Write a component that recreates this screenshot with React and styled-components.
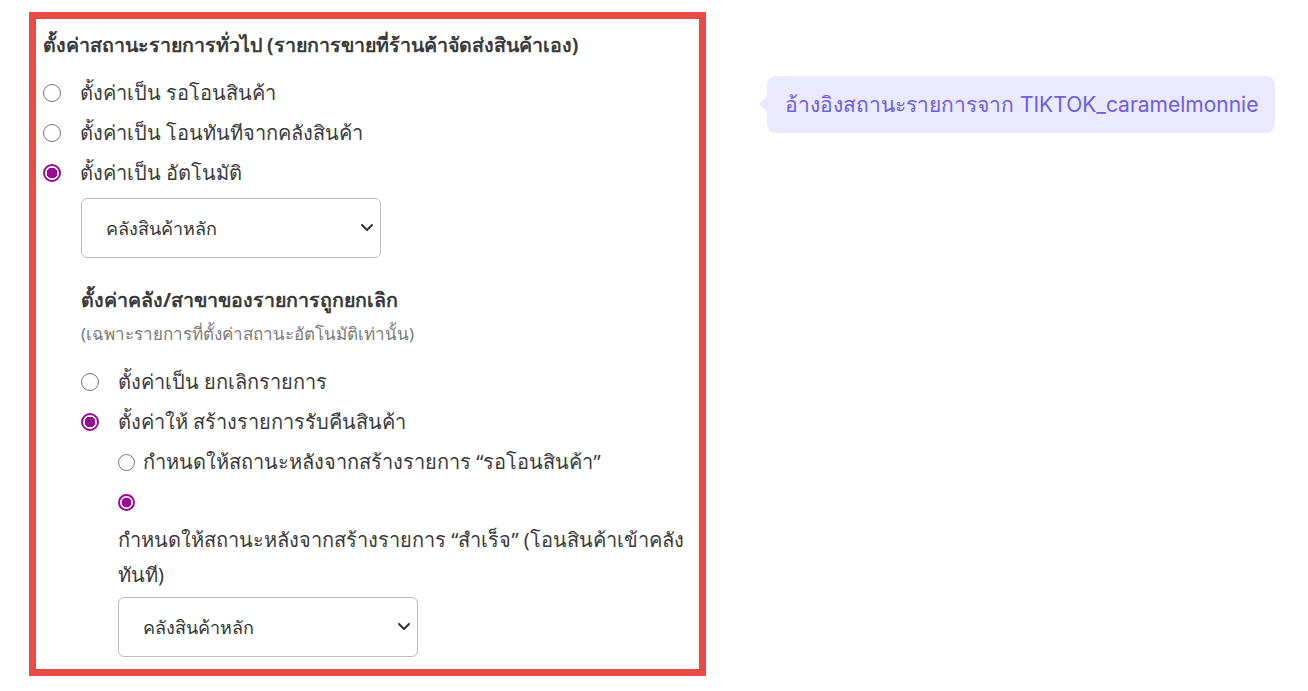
import React, { useState } from "react";
import styled, { createGlobalStyle } from "styled-components";

const GlobalStyle = createGlobalStyle`
  body {
    margin: 0;
    background: #fff;
    font-family: "Noto Sans", "Liberation Sans", sans-serif;
    color: #3b3b3b;
  }
`;

const Page = styled.div`
  display: flex;
  align-items: flex-start;
  padding: 12px 0 0 29px;
`;

const Box = styled.div`
  width: 677px;
  border: 7px solid #e94b45;
  padding: 8px 6px 12px 7px;
  box-sizing: border-box;
`;

const Heading = styled.div`
  font-size: 19.6px;
  font-weight: 700;
  line-height: 36px;
  margin-bottom: ${(p) => p.$mb || 0}px;
`;

const Note = styled.div`
  font-size: 17px;
  line-height: 32px;
  color: #7a7a7a;
  margin-bottom: 12px;
`;

const Section = styled.div`
  padding-left: ${(p) => p.$indent || 0}px;
  margin-top: ${(p) => p.$mt || 0}px;
`;

const Row = styled.label`
  display: flex;
  align-items: center;
  gap: ${(p) => p.$gap || 19}px;
  height: 40px;
  font-size: 20px;
  cursor: pointer;
`;

const Radio = styled.input.attrs({ type: "radio" })`
  appearance: none;
  margin: 0;
  flex: none;
  width: ${(p) => p.$size || 18}px;
  height: ${(p) => p.$size || 18}px;
  border: 1.5px solid #767676;
  border-radius: 50%;
  box-sizing: border-box;
  background: #fff;
  cursor: pointer;

  &:checked {
    border: 2px solid #9a0b93;
    background: radial-gradient(circle, #9a0b93 0 52%, #fff 56%);
  }
`;

const LongLabel = styled.div`
  font-size: 20px;
  line-height: 35px;
`;

const SelectWrap = styled.div`
  position: relative;
  width: 300px;
  margin-top: 5px;
`;

const Select = styled.select`
  appearance: none;
  width: 100%;
  height: 60px;
  border: 1px solid #bdbdbd;
  border-radius: 6px;
  background: #fff;
  padding: 0 24px;
  font-family: inherit;
  font-size: 18px;
  color: #333;
  outline: none;
`;

const Chevron = styled.svg`
  position: absolute;
  right: 7px;
  top: 24px;
  pointer-events: none;
`;

const Tip = styled.div`
  position: relative;
  margin: 64px 0 0 61px;
  height: 57px;
  padding: 0 17px 0 18px;
  display: flex;
  align-items: center;
  background: #ebe9fd;
  border-radius: 9px;
  color: #6b5fe0;
  font-family: Inter, "Noto Sans", sans-serif;
  font-size: 21px;
  white-space: nowrap;

  &::before {
    content: "";
    position: absolute;
    left: -8px;
    top: 20px;
    border-top: 8px solid transparent;
    border-bottom: 8px solid transparent;
    border-right: 8px solid #ebe9fd;
  }
`;

const WarehouseSelect = () => (
  <SelectWrap>
    <Select defaultValue="main">
      <option value="main">คลังสินค้าหลัก</option>
    </Select>
    <Chevron width="14" height="10" viewBox="0 0 14 10">
      <path d="M2 3l5 5 5-5" fill="none" stroke="#333" strokeWidth="2" strokeLinecap="round" strokeLinejoin="round" />
    </Chevron>
  </SelectWrap>
);

export default function App() {
  const [status, setStatus] = useState("auto");
  const [cancel, setCancel] = useState("return");
  const [after, setAfter] = useState("done");

  return (
    <>
      <GlobalStyle />
      <Page>
        <Box>
          <Heading $mb={10}>ตั้งค่าสถานะรายการทั่วไป (รายการขายที่ร้านค้าจัดส่งสินค้าเอง)</Heading>
          <Row>
            <Radio name="status" checked={status === "wait"} onChange={() => setStatus("wait")} />
            ตั้งค่าเป็น รอโอนสินค้า
          </Row>
          <Row>
            <Radio name="status" checked={status === "now"} onChange={() => setStatus("now")} />
            ตั้งค่าเป็น โอนทันทีจากคลังสินค้า
          </Row>
          <Row>
            <Radio name="status" checked={status === "auto"} onChange={() => setStatus("auto")} />
            ตั้งค่าเป็น อัตโนมัติ
          </Row>

          <Section $indent={38}>
            <WarehouseSelect />

            <Section $mt={24}>
              <Heading>ตั้งค่าคลัง/สาขาของรายการถูกยกเลิก</Heading>
              <Note>(เฉพาะรายการที่ตั้งค่าสถานะอัตโนมัติเท่านั้น)</Note>
              <Row>
                <Radio name="cancel" checked={cancel === "cancel"} onChange={() => setCancel("cancel")} />
                ตั้งค่าเป็น ยกเลิกรายการ
              </Row>
              <Row>
                <Radio name="cancel" checked={cancel === "return"} onChange={() => setCancel("return")} />
                ตั้งค่าให้ สร้างรายการรับคืนสินค้า
              </Row>

              <Section $indent={37}>
                <Row $gap={8}>
                  <Radio $size={17} name="after" checked={after === "wait"} onChange={() => setAfter("wait")} />
                  กำหนดให้สถานะหลังจากสร้างรายการ “รอโอนสินค้า”
                </Row>
                <Row>
                  <Radio $size={17} name="after" checked={after === "done"} onChange={() => setAfter("done")} />
                </Row>
                <LongLabel>
                  กำหนดให้สถานะหลังจากสร้างรายการ “สำเร็จ” (โอนสินค้าเข้าคลัง ทันที)
                </LongLabel>
                <WarehouseSelect />
              </Section>
            </Section>
          </Section>
        </Box>
        <Tip>อ้างอิงสถานะรายการจาก TIKTOK_caramelmonnie</Tip>
      </Page>
    </>
  );
}
